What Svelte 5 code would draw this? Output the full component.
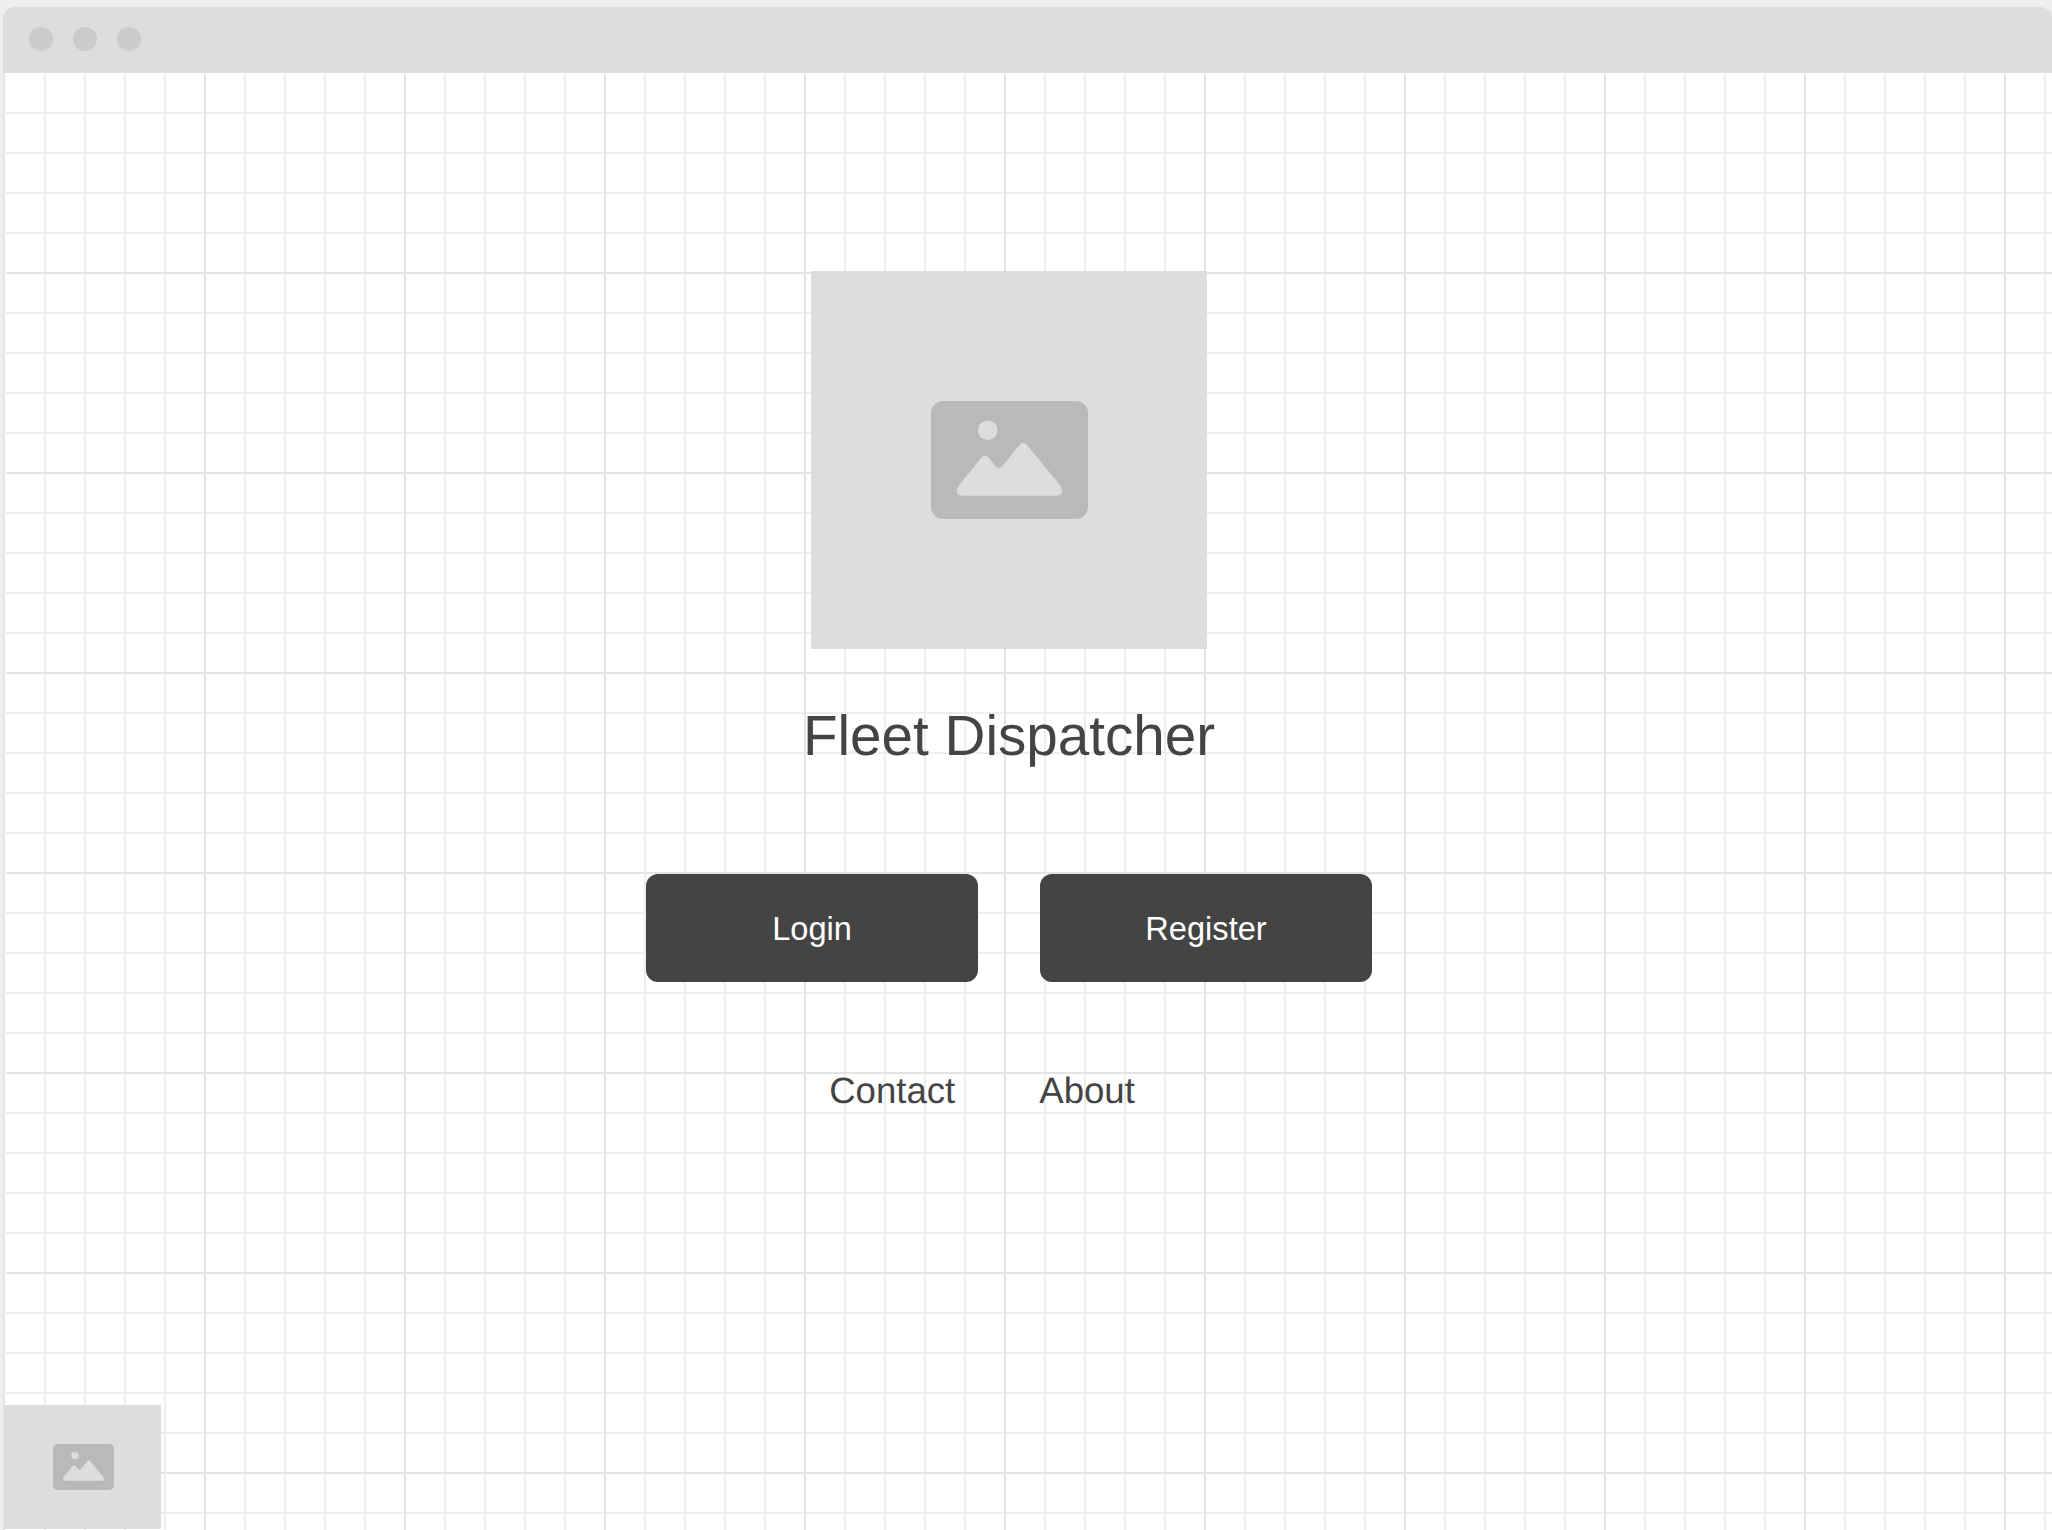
<script>
  const dots = [0, 1, 2];
</script>

{#snippet placeholder()}
  <svg class="glyph" viewBox="0 0 157 118" aria-hidden="true">
    <rect width="157" height="118" rx="12" fill="#b9b9b9" />
    <circle cx="56.7" cy="29.3" r="9.8" fill="#dddddd" />
    <path
      d="M27.5 85 L50.5 56.5 Q54 52.5 57.5 56.5 L64.5 65 Q68 69 71.5 65 L88.5 44 Q92.3 39.5 96 44 L129 84 Q135 94.7 124 94.7 L33 94.7 Q22 94.7 27.5 85 Z"
      fill="#dddddd"
    />
  </svg>
{/snippet}

<div class="window">
  <header class="titlebar">
    {#each dots as dot (dot)}
      <span class="dot"></span>
    {/each}
  </header>
  <main class="canvas">
    <div class="center">
      <div class="hero">{@render placeholder()}</div>
      <h1>Fleet Dispatcher</h1>
      <div class="actions">
        <button>Login</button>
        <button>Register</button>
      </div>
      <nav class="links">
        <a href="#contact">Contact</a>
        <a href="#about">About</a>
      </nav>
    </div>
    <div class="corner">{@render placeholder()}</div>
  </main>
</div>

<style>
  :global(body) {
    margin: 0;
    background: #eeeeee;
    font-family: "Liberation Sans", Arial, sans-serif;
    text-rendering: geometricPrecision;
  }

  .window {
    width: 2049px;
    height: 1523px;
    margin: 7px 0 0 3px;
    border-radius: 12px 12px 0 0;
    overflow: hidden;
    display: flex;
    flex-direction: column;
    background: #e4e4e4;
  }

  .titlebar {
    height: 64px;
    flex: none;
    padding: 0 0 2px 26px;
    display: flex;
    align-items: center;
    gap: 20px;
    background: #dddddd;
  }

  .dot {
    width: 24px;
    height: 24px;
    border-radius: 50%;
    background: #cbcbcb;
  }

  .canvas {
    position: relative;
    flex: 1;
    margin-left: 2px;
    border: solid #ffffff;
    border-width: 1px 0 0 1px;
    background-color: #ffffff;
    background-image:
      linear-gradient(to bottom, transparent 198px, #e4e4e4 198px),
      linear-gradient(to right, transparent 198px, #e4e4e4 198px),
      linear-gradient(to bottom, transparent 38px, #eeeeee 38px),
      linear-gradient(to right, transparent 38px, #eeeeee 38px);
    background-size: 200px 200px, 200px 200px, 40px 40px, 40px 40px;
    background-clip: padding-box;
    background-origin: padding-box;
  }

  .center {
    display: flex;
    flex-direction: column;
    align-items: center;
    width: 1010px;
    margin: 197px 0 0 498px;
  }

  .hero {
    width: 396px;
    height: 378px;
    display: flex;
    align-items: center;
    justify-content: center;
    background: #dddddd;
  }

  .hero .glyph {
    width: 157px;
    height: 118px;
  }

  h1 {
    margin: 54px 0 0;
    font-size: 56.6px;
    font-weight: 400;
    line-height: 66px;
    color: #444444;
  }

  .actions {
    display: flex;
    gap: 62px;
    margin-top: 105px;
  }

  button {
    width: 332px;
    height: 108px;
    border: none;
    border-radius: 12px;
    padding: 2px 0 0;
    background: #444444;
    color: #ffffff;
    font: 400 32.6px "Liberation Sans", Arial, sans-serif;
  }

  .links {
    display: flex;
    gap: 84px;
    margin-top: 88px;
    padding-right: 54px;
  }

  .links a {
    font-size: 36.6px;
    line-height: 42px;
    color: #444444;
    text-decoration: none;
  }

  .corner {
    position: absolute;
    left: -2px;
    bottom: 1px;
    width: 155px;
    height: 124px;
    padding-left: 2px;
    display: flex;
    align-items: center;
    justify-content: center;
    background: #dddddd;
  }

  .corner .glyph {
    width: 61px;
    height: 46px;
  }
</style>
